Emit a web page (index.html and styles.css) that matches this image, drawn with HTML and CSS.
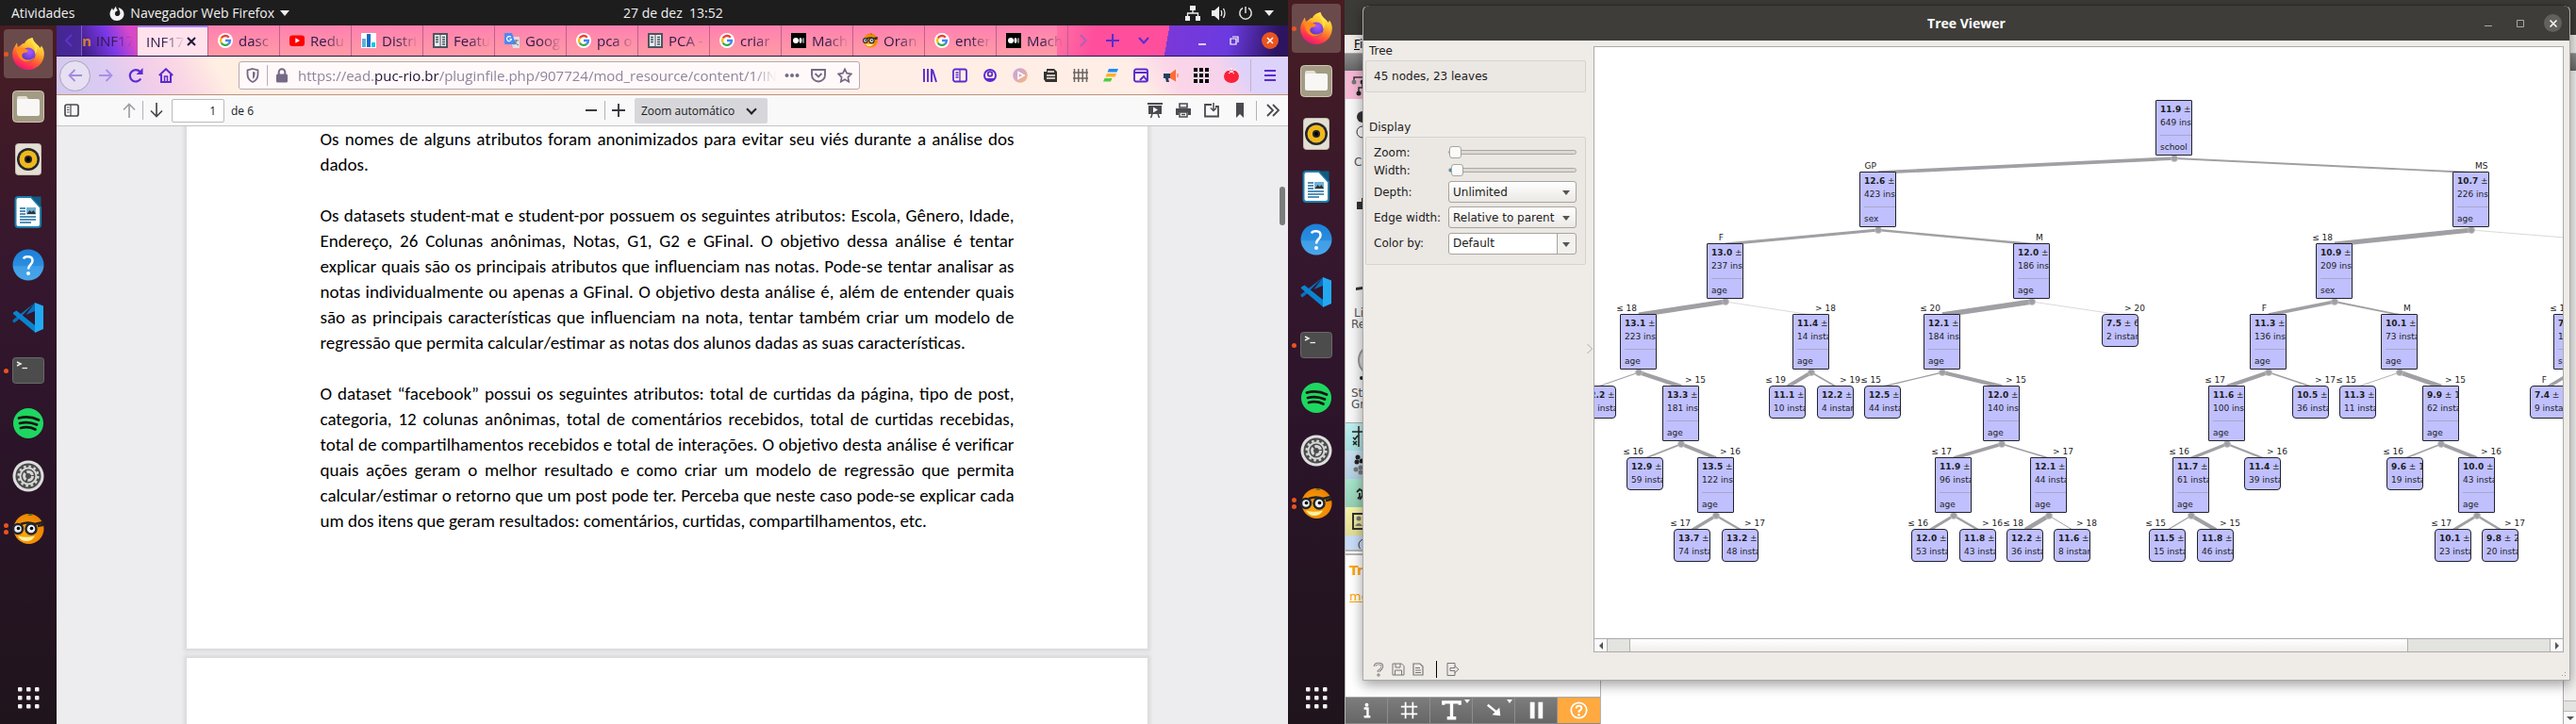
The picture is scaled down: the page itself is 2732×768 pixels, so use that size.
FILE: index.html
```html
<!DOCTYPE html>
<html lang="pt-BR">
<head>
<meta charset="utf-8">
<title>Tree Viewer</title>
<link rel="stylesheet" href="styles.css">
</head>
<body>
<svg class="defs" aria-hidden="true">
  <defs>
    <linearGradient id="fxg" x1="0.8" y1="0" x2="0.3" y2="1"><stop offset="0" stop-color="#fff44f"/><stop offset=".35" stop-color="#ffbd2f"/><stop offset=".6" stop-color="#ff6b2b"/><stop offset=".85" stop-color="#ff2a5a"/><stop offset="1" stop-color="#e31587"/></linearGradient>
    <radialGradient id="fxp" cx=".6" cy=".3" r=".8"><stop offset="0" stop-color="#a85bff"/><stop offset="1" stop-color="#4a2bc0"/></radialGradient>
    <linearGradient id="helpg" x1="0" y1="0" x2="0" y2="1"><stop offset="0" stop-color="#1b7fd8"/><stop offset=".53" stop-color="#2b8ee0"/><stop offset=".55" stop-color="#3f9ee6"/><stop offset="1" stop-color="#48a6ea"/></linearGradient>
    <radialGradient id="orng" cx=".4" cy=".6" r=".7"><stop offset="0" stop-color="#ffa90e"/><stop offset="1" stop-color="#ea7c00"/></radialGradient>
    <linearGradient id="playg" x1="0" y1="0" x2="1" y2="1"><stop offset="0" stop-color="#b6a8e8"/><stop offset=".5" stop-color="#e0a8b8"/><stop offset="1" stop-color="#f0c070"/></linearGradient>
  </defs>
  <symbol id="d-firefox" viewBox="0 0 34 34">
    <path fill="url(#fxg)" d="M17 34C8 34 0 27 .2 17.500C.3 12 3 9 4.200 6.500C4.800 5.300 5.200 5.800 5.300 7.500L6 10L9 8C11 6 12 6 13 6C14 3 18 .5 21.500 0C21 2 23.500 5 26 7C29 9 29 11 30 10.500L31 8.500C33 11.500 34 14.500 33.800 17.500C33.600 27 26 34 17 34z"/>
    <circle cx="17" cy="18" r="7.500" fill="url(#fxp)"/>
    <path fill="#ff8a1f" d="M4 13C8 9 12 10 17 13.500C17 15 15 16 12.500 16C10 17 9.500 20 12 22C15 24.500 20 24 23.500 21C21 27 10 27 6.500 20z"/>
    <path fill="#ffe14a" d="M20 1C19 6 26 10 24 17C27 14 27 11 26 9L30 14C29 8 23 6 21.500 0z"/>
  </symbol>
  <symbol id="d-files" viewBox="0 0 34 34"><rect x=".5" y=".5" width="33" height="33" rx="4" fill="#a39b84" stroke="#cfc8b4"/><path d="M5 8a2 2 0 0 1 2-2h8l2 3v6H5z" fill="#e4dfd3"/><rect x="5" y="9" width="24" height="18" rx="2" fill="#f8f7f5"/></symbol>
  <symbol id="d-music" viewBox="0 0 34 34"><rect x="3.500" y=".5" width="27" height="33" rx="3" fill="#e4dfd3" stroke="#c4bdae"/><circle cx="17" cy="17" r="12" fill="#23262e"/><circle cx="17" cy="17" r="9.500" fill="#f0b81c"/><circle cx="17" cy="17" r="4" fill="#22242a"/><circle cx="17" cy="17" r="2" fill="#000"/></symbol>
  <symbol id="d-writer" viewBox="0 0 34 34"><path d="M3.500 4a3 3 0 0 1 3-3H20L30 12V30a3 3 0 0 1-3 3H6.500a3 3 0 0 1-3-3z" fill="#fff" stroke="#1b7fb0" stroke-width="2"/><path d="M20 .5h10.500V12z" fill="#125a80"/><path d="M8 13h6M8 16h6M8 19h6M8 22h17M8 25h17M8 28h12" stroke="#1b6ea0" stroke-width="1.500"/><rect x="15" y="12" width="10" height="7.500" fill="#6db2d8"/><path d="M15.500 19l3-4 2 2 2-2 2.500 4z" fill="#333"/></symbol>
  <symbol id="d-help" viewBox="0 0 34 34"><circle cx="17" cy="17" r="16.500" fill="url(#helpg)"/><path d="M12 10.500C13 7.500 21.500 7 21.500 12.500C21.500 17 17 16.500 17 21.500" fill="none" stroke="#fff" stroke-width="2.500"/><circle cx="17" cy="26" r="2" fill="#fff"/></symbol>
  <symbol id="d-code" viewBox="0 0 34 34"><path d="M24 1L5.500 20 2 22.500.500 21V19.500L24 1z" fill="#0a6fb8"/><path d="M1 11.500l3.500-2L24 25v7.500L1 13z" fill="#0a84d0"/><path d="M24 1l-9.500 13L24 10z" fill="#0a6fb8"/><path d="M24 1l9 3.500V29l-9 4z" fill="#23a9f2"/></symbol>
  <symbol id="d-term" viewBox="0 0 34 34"><rect x=".5" y="3.500" width="33" height="27" rx="3" fill="#4c4c4c" stroke="#6a6a6a"/><path d="M5 8l4 2-4 2" fill="none" stroke="#eee" stroke-width="1.500"/><path d="M10.500 14.500h5.500" stroke="#eee" stroke-width="1.300"/></symbol>
  <symbol id="d-spot" viewBox="0 0 34 34"><circle cx="17" cy="17" r="16" fill="#1ed760"/><path d="M7 11.500Q18 8.500 28 13.500M8 17Q17 14.500 26 18.500M9 22Q17 19.800 24.500 23.500" fill="none" stroke="#191414" stroke-width="2.800" stroke-linecap="round"/></symbol>
  <symbol id="d-set" viewBox="0 0 34 34"><circle cx="17" cy="17" r="16.500" fill="#dedede"/><circle cx="17" cy="17" r="13.500" fill="#4b4b4b"/><circle cx="17" cy="17" r="10.300" fill="none" stroke="#d6d6d6" stroke-width="2.500" stroke-dasharray="2.600 2.800"/><circle cx="17" cy="17" r="8.500" fill="none" stroke="#d6d6d6" stroke-width="2"/><circle cx="17" cy="17" r="4.500" fill="none" stroke="#d6d6d6" stroke-width="3" stroke-dasharray="7.500 2"/></symbol>
  <symbol id="d-orange" viewBox="0 0 34 34"><circle cx="17.500" cy="17" r="16" fill="url(#orng)"/><path d="M17 2.500q2-1.500 4 0" stroke="#3c6b1e" stroke-width="1.500" fill="none"/><path d="M6 24.500Q15 27 24 24.500Q21 30 15 30Q9 30 6 24.500z" fill="#fff3a0"/><path d="M9 12q8-3 15 0l8-2v3l-5 1" fill="none" stroke="#222" stroke-width="2.500"/><circle cx="6" cy="17" r="5" fill="#e9eef5" stroke="#23262c" stroke-width="2.500"/><circle cx="20" cy="17" r="5.500" fill="#e9eef5" stroke="#23262c" stroke-width="2.500"/><circle cx="6.500" cy="16.500" r="1.800"/><circle cx="20.500" cy="16.500" r="1.800"/></symbol>
  <symbol id="d-apps" viewBox="0 0 34 34"><g fill="#f2f2f2"><rect x="6" y="6" width="4.500" height="4.500" rx="1"/><rect x="15" y="6" width="4.500" height="4.500" rx="1"/><rect x="24" y="6" width="4.500" height="4.500" rx="1"/><rect x="6" y="15" width="4.500" height="4.500" rx="1"/><rect x="15" y="15" width="4.500" height="4.500" rx="1"/><rect x="24" y="15" width="4.500" height="4.500" rx="1"/><rect x="6" y="24" width="4.500" height="4.500" rx="1"/><rect x="15" y="24" width="4.500" height="4.500" rx="1"/><rect x="24" y="24" width="4.500" height="4.500" rx="1"/></g></symbol>
  <symbol id="f-google" viewBox="0 0 16 16"><circle cx="8" cy="8" r="8" fill="#fff"/><g fill="none" stroke-width="2.300"><path d="M11.800 4.700A5 5 0 0 0 3.700 5.500" stroke="#ea4335"/><path d="M3.700 5.500A5 5 0 0 0 3.700 10.500" stroke="#fbbc05"/><path d="M3.700 10.500A5 5 0 0 0 11.300 11.700" stroke="#34a853"/><path d="M11.300 11.700A5 5 0 0 0 13 8H8" stroke="#4285f4"/></g></symbol>
  <symbol id="f-yt" viewBox="0 0 16 16"><rect y="2.500" width="16" height="11.500" rx="3" fill="#f00"/><path d="M6.300 5.300v5.400L11 8z" fill="#fff"/></symbol>
  <symbol id="f-bars" viewBox="0 0 16 16"><path fill="#fff" d="M0 0h16v16H0z"/><path fill="#5fb0d8" d="M1 6h4v9H1z"/><path fill="#0a6cc8" d="M6 1h4v14H6z"/><path fill="#12c8e8" d="M11 10h4v5h-4z"/></symbol>
  <symbol id="f-book" viewBox="0 0 16 16"><path fill="#4c555c" d="M0 0h16v16H0z"/><path fill="#e8eef2" d="M2 2h5.500v12H2zM8.500 2H14v12H8.500z"/><path stroke="#4c555c" stroke-width="1.300" d="M3 4.500h3M3 7h3M3 9.500h3M10 4.500h3M10 7h3M10 9.500h3M10 12h3"/></symbol>
  <symbol id="f-trans" viewBox="0 0 16 16"><path fill="#e0e0e0" d="M6 4h9a1 1 0 0 1 1 1v10a1 1 0 0 1-1 1H9z"/><path fill="#4a8af4" d="M1 0h7l4 12H1a1 1 0 0 1-1-1V1a1 1 0 0 1 1-1z"/><path d="M7 4.500A2.500 2.500 0 1 0 7.500 6.500H5.300" fill="none" stroke="#fff" stroke-width="1.200"/><path d="M10 8h5M12.500 7v1q0 3-2.500 4.500M11 9q1 3 4 4" fill="none" stroke="#6a7a8a"/></symbol>
  <symbol id="f-med" viewBox="0 0 16 16"><path d="M0 0h16v16H0z"/><circle cx="5" cy="8" r="3" fill="#fff"/><ellipse cx="10" cy="8" rx="1.500" ry="2.900" fill="#fff"/><path stroke="#fff" d="M13 5.300v5.400"/></symbol>
</svg>

<main class="desktop">
  <section class="monitor">
    <header class="topbar">
      <div class="topbar-left">
        <button>Atividades</button>
        <button class="appmenu"><svg width="16" height="16" viewBox="0 0 16 16"><path fill="#f2f2f2" d="M8 16C3.500 16 .5 12.500.5 8.500C.5 6 2 4 3 2.500L4 5L7 .5C7 3 8 4 9 5L6.500 6.500C5 9 6.500 11 8.500 11C11 11 12 8.500 11 6L9.500 2C13 3 15.500 5.500 15.500 9C15.500 13 12 16 8 16z"/></svg>Navegador Web Firefox<i class="caret"></i></button>
      </div>
      <time class="clock">27 de dez&nbsp; 13:52</time>
      <div class="tray">
        <svg width="16" height="16" viewBox="0 0 16 16"><path fill="#eee" d="M5 0h6v5H5zM0 11h5v5H0zM11 11h5v5h-5z"/><path d="M8 5v3M2.500 11V8h11v3" fill="none" stroke="#eee" stroke-width="1.300"/></svg>
        <svg width="16" height="16" viewBox="0 0 16 16"><path fill="#eee" d="M0 5h3l5-4.500v15L3 11H0z"/><path d="M10 5q1.500 3 0 6M12.500 3q3 5 0 10" fill="none" stroke="#eee" stroke-width="1.300"/></svg>
        <svg width="16" height="16" viewBox="0 0 16 16"><path d="M8 1v7M5 2.500a6.200 6.200 0 1 0 6 0" fill="none" stroke="#ddd" stroke-width="1.500"/></svg>
        <i class="caret"></i>
      </div>
    </header>
    <div class="workspace">
      <nav class="dock" aria-label="Dock">
        <button class="on one" aria-label="Firefox"><svg><use href="#d-firefox"/></svg></button>
        <button aria-label="Arquivos"><svg><use href="#d-files"/></svg></button>
        <button aria-label="Rhythmbox"><svg><use href="#d-music"/></svg></button>
        <button aria-label="Writer"><svg><use href="#d-writer"/></svg></button>
        <button aria-label="Ajuda"><svg><use href="#d-help"/></svg></button>
        <button aria-label="Code"><svg><use href="#d-code"/></svg></button>
        <button class="one" aria-label="Terminal"><svg><use href="#d-term"/></svg></button>
        <button aria-label="Spotify"><svg><use href="#d-spot"/></svg></button>
        <button aria-label="Configurações"><svg><use href="#d-set"/></svg></button>
        <button class="two" aria-label="Orange"><svg><use href="#d-orange"/></svg></button>
        <button class="apps" aria-label="Aplicativos"><svg><use href="#d-apps"/></svg></button>
      </nav>
      <div class="browser">
        <div class="tabs">
          <button class="tab-scroll" aria-label="Anterior"><svg width="8" height="14" viewBox="0 0 8 14"><path d="M7 1L1 7l6 6" fill="none" stroke="#5a35c8" stroke-width="2"/></svg></button>
          <button class="tab part"><b>n</b><span>INF17</span></button>
          <button class="tab active"><span>INF17</span><svg width="10" height="12" viewBox="0 0 10 12"><path d="M1 2l8 8M9 2l-8 8" stroke="#20123a" stroke-width="2"/></svg></button>
          <button class="tab"><svg><use href="#f-google"/></svg><span>dasc</span></button>
          <button class="tab"><svg><use href="#f-yt"/></svg><span>Redu</span></button>
          <button class="tab"><svg><use href="#f-bars"/></svg><span>Distri</span></button>
          <button class="tab"><svg><use href="#f-book"/></svg><span>Featu</span></button>
          <button class="tab"><svg><use href="#f-trans"/></svg><span>Goog</span></button>
          <button class="tab"><svg><use href="#f-google"/></svg><span>pca o</span></button>
          <button class="tab"><svg><use href="#f-book"/></svg><span>PCA -</span></button>
          <button class="tab"><svg><use href="#f-google"/></svg><span>criar</span></button>
          <button class="tab"><svg><use href="#f-med"/></svg><span>Mach</span></button>
          <button class="tab"><svg viewBox="0 0 34 34"><use href="#d-orange"/></svg><span>Oran</span></button>
          <button class="tab"><svg><use href="#f-google"/></svg><span>enter</span></button>
          <button class="tab"><svg><use href="#f-med"/></svg><span>Mach</span></button>
          <div class="tab-tools">
            <svg width="8" height="14" viewBox="0 0 8 14"><path d="M1 1l5.500 6L1 13" fill="none" stroke="#b060b8" stroke-width="2"/></svg>
            <svg width="14" height="14" viewBox="0 0 14 14"><path d="M7 0v14M0 7h14" stroke="#5a2bd0" stroke-width="2"/></svg>
            <svg width="12" height="14" viewBox="0 0 12 14"><path d="M1 4l5 5.500L11 4" fill="none" stroke="#5a2bd0" stroke-width="2"/></svg>
          </div>
          <div class="win-tools">
            <svg width="10" height="10" viewBox="0 0 10 10"><path d="M1 9h8" stroke="#fff" stroke-width="1.500"/></svg>
            <svg width="10" height="10" viewBox="0 0 10 10"><path d="M1 3h6v6H1zM3 1h6v6" fill="none" stroke="#fff" stroke-width="1.200"/></svg>
            <button class="close" aria-label="Fechar"><svg width="8" height="8" viewBox="0 0 8 8"><path d="M1 1l6 6M7 1L1 7" stroke="#fff" stroke-width="1.500"/></svg></button>
          </div>
        </div>
        <div class="navbar">
          <div class="nav-buttons">
            <button class="back" aria-label="Voltar"><svg width="16" height="16" viewBox="0 0 16 16"><path d="M15 8H1M7.500 2L1.500 8l6 6" fill="none" stroke="#a58ae0" stroke-width="1.800"/></svg></button>
            <button aria-label="Avançar"><svg width="16" height="16" viewBox="0 0 16 16"><path d="M1 8h14M8.500 2l6 6-6 6" fill="none" stroke="#a98fe8" stroke-width="1.800"/></svg></button>
            <button aria-label="Recarregar"><svg width="16" height="16" viewBox="0 0 16 16"><path d="M13.300 11.500A6.200 6.200 0 1 1 12.500 4" fill="none" stroke="#5a2bd0" stroke-width="2.200"/><path d="M15.500 0v7H8.500z" fill="#5a2bd0"/></svg></button>
            <button aria-label="Início"><svg width="16" height="16" viewBox="0 0 16 16"><path d="M.800 8L8 1.200 15.200 8M3 7v8h10V7" fill="none" stroke="#5a2bd0" stroke-width="2"/><path d="M6.500 9h3v6h-3z" fill="none" stroke="#5a2bd0" stroke-width="1.500"/></svg></button>
          </div>
          <div class="urlbar">
            <svg width="14" height="16" viewBox="0 0 14 16"><path d="M7 1l5.500 1.500V7q0 5.500-5.500 8Q1.500 12.500 1.500 7V2.500z" fill="none" stroke="#746a86" stroke-width="1.800"/><path d="M7 4v8Q9.500 10 9.500 7V4.500z" fill="#746a86"/></svg>
            <i class="vr"></i>
            <svg width="14" height="16" viewBox="0 0 14 16"><rect x="1" y="6.500" width="12" height="9" rx="1.500" fill="#746a86"/><path d="M3.700 7V4.500a3.300 3.300 0 0 1 6.600 0V7" fill="none" stroke="#746a86" stroke-width="2"/></svg>
            <a class="url" href="#doc">https://ead.<b>puc-rio.br</b>/pluginfile.php/907724/mod_resource/content/1/IN</a>
            <svg width="16" height="16" viewBox="0 0 16 16"><g fill="#746a86"><circle cx="2.500" cy="8" r="2"/><circle cx="8" cy="8" r="2"/><circle cx="13.500" cy="8" r="2"/></g></svg>
            <svg width="16" height="16" viewBox="0 0 16 16"><path d="M1 2h14v5.500a7 7 0 0 1-14 0z" fill="none" stroke="#746a86" stroke-width="1.900"/><path d="M4.500 6L8 9.500 11.500 6" fill="none" stroke="#746a86" stroke-width="1.900"/></svg>
            <svg width="16" height="16" viewBox="0 0 16 16"><path d="M8 1.300l2.100 4.400 4.700.7-3.400 3.400.8 4.900L8 12.300l-4.200 2.400.8-4.900L1.200 6.400l4.700-.7z" fill="none" stroke="#746a86" stroke-width="1.700"/></svg>
          </div>
          <div class="addons">
            <svg viewBox="0 0 16 16"><path d="M2 1v14M6 1v14M10 1v14M11 2l4 13" stroke="#5a2bd0" stroke-width="1.900"/></svg>
            <svg viewBox="0 0 16 16"><rect x="1" y="1.500" width="14" height="13" rx="2" fill="none" stroke="#5a2bd0" stroke-width="1.800"/><path d="M8 2v12M3.500 5h3M3.500 7.500h3M3.500 10h3" stroke="#5a2bd0" stroke-width="1.300"/></svg>
            <svg viewBox="0 0 16 16"><circle cx="8" cy="8" r="6" fill="none" stroke="#5a2bd0" stroke-width="2"/><circle cx="8" cy="6.500" r="2.300" fill="none" stroke="#5a2bd0" stroke-width="1.800"/><path d="M3 11h10l-3 3H6z" fill="#5a2bd0"/></svg>
            <svg viewBox="0 0 16 16"><circle cx="8" cy="8" r="7.800" fill="url(#playg)"/><path d="M6 4.500v7L12 8z" fill="none" stroke="#fff" stroke-width="1.500"/></svg>
            <svg viewBox="0 0 16 16"><path d="M4 1h8l3 3v11H3L1 12V4h3z" fill="#333"/><path d="M5 4h7M4 8h9M4 11h9" stroke="#fff0e8" stroke-width="1.500"/></svg>
            <svg viewBox="0 0 16 16"><path d="M1.500 1v14M5.800 1v14M10.200 1v14M14.500 1v14M0 5h16M0 11h16" stroke="#6a6560" stroke-width="1.500"/></svg>
            <svg viewBox="0 0 16 16"><path d="M6 1h10l-1.500 3.500h-10z" fill="#1a8cff"/><path d="M4 6h10l-1.500 3.500h-10z" fill="#ffb020"/><path d="M1.500 11h8L8 14.500H0z" fill="#4cd040"/></svg>
            <svg viewBox="0 0 16 16"><rect x="1" y="1.500" width="14" height="13" rx="2" fill="none" stroke="#5a2bd0" stroke-width="1.900"/><path d="M1 5h14M7 13l4-4 4 5" fill="none" stroke="#5a2bd0" stroke-width="2"/></svg>
            <svg viewBox="0 0 16 16"><path d="M0 6h7v5H5l1 4H3L2 11H0z" fill="#25405c"/><path d="M7 6l6-4.500v13L7 11z" fill="#ff6a38"/><path d="M14 6h2v4h-2z" fill="#f0a080"/></svg>
            <svg viewBox="0 0 16 16"><path d="M0 0h4v4H0zM6 0h4v4H6zM12 0h4v4h-4zM0 6h4v4H0zM6 6h4v4H6zM12 6h4v4h-4zM0 12h4v4H0zM6 12h4v4H6zM12 12h4v4h-4z"/></svg>
            <svg viewBox="0 0 16 16"><ellipse cx="8" cy="9" rx="8" ry="7" fill="#fa2138"/><path d="M8 0v4M4 1.500l4 3 4-3M5 6l3-2 3 2" stroke="#fff" fill="none"/></svg>
          </div>
          <i class="vr nav-vr"></i>
          <button class="burger" aria-label="Menu"><svg width="12" height="14" viewBox="0 0 12 14"><path d="M0 2h12M0 7h12M0 12h12" stroke="#5a2bd0" stroke-width="2.200"/></svg></button>
        </div>
        <div class="pdfbar">
          <div class="pdf-left">
            <button class="side" aria-label="Painel"><svg width="16" height="14" viewBox="0 0 16 14"><rect x="1" y="1" width="14" height="12" rx="2" fill="none" stroke="#4a4a4f" stroke-width="1.700"/><path d="M7 1v12M3 4h2.500M3 6.500h2.500M3 9h2.500" stroke="#4a4a4f" stroke-width="1.200"/></svg></button>
            <button aria-label="Anterior"><svg width="14" height="16" viewBox="0 0 14 16"><path d="M7 16V1.500M1 7.500l6-6 6 6" fill="none" stroke="#a0a0a3" stroke-width="1.700"/></svg></button>
            <i class="vr"></i>
            <button aria-label="Próxima"><svg width="14" height="16" viewBox="0 0 14 16"><path d="M7 0v14.500M1 8.500l6 6 6-6" fill="none" stroke="#4a4a4f" stroke-width="1.700"/></svg></button>
            <input id="pg" value="1" aria-label="Página"><label for="pg">de 6</label>
          </div>
          <div class="pdf-zoom">
            <button aria-label="Reduzir"><svg width="14" height="14" viewBox="0 0 14 14"><path d="M1 7h12" stroke="#3a3a3f" stroke-width="2"/></svg></button>
            <i class="vr"></i>
            <button aria-label="Ampliar"><svg width="14" height="14" viewBox="0 0 14 14"><path d="M0 7h14M7 0v14" stroke="#3a3a3f" stroke-width="1.900"/></svg></button>
            <span class="zoomsel"><select aria-label="Zoom"><option>Zoom automático</option></select></span>
          </div>
          <div class="pdf-right">
            <svg viewBox="0 0 16 16"><path d="M0 0h16v2H0zM1 3h14v9H1z" fill="#4a4a4f"/><path d="M6 4.500v6L11 7.500z" fill="#f9f9fa"/><path d="M5 12l-1.500 4M11 12l1.500 4" stroke="#4a4a4f" stroke-width="1.500"/></svg>
            <svg viewBox="0 0 16 16"><path d="M4 1h8v4H4z" fill="none" stroke="#4a4a4f" stroke-width="1.600"/><path d="M0 6h16v7h-3v-3H3v3H0z" fill="#4a4a4f"/><path d="M4 10h8v5H4zM6 12.500h4" fill="none" stroke="#4a4a4f" stroke-width="1.500"/></svg>
            <svg viewBox="0 0 16 16"><path d="M8 2H1v12.500h14V4h-3" fill="none" stroke="#4a4a4f" stroke-width="1.800"/><path d="M10 0v8M7 5.500l3 3 3-3" fill="none" stroke="#4a4a4f" stroke-width="1.500"/></svg>
            <svg viewBox="0 0 16 16"><path d="M4 0h8v16l-4-4-4 4z" fill="#4a4a4f"/></svg>
            <i class="vr"></i>
            <svg viewBox="0 0 16 16"><path d="M2 2l6 6-6 6M8 2l6 6-6 6" fill="none" stroke="#4a4a4f" stroke-width="1.800"/></svg>
          </div>
        </div>
        <div class="viewer">
          <article class="sheet first" id="doc">
            <p><span>Os nomes de alguns atributos foram anonimizados para evitar seu viés durante a análise dos</span><span>dados.</span></p>
            <p><span>Os datasets student-mat e student-por possuem os seguintes atributos: Escola, Gênero, Idade,</span><span>Endereço, 26 Colunas anônimas, Notas, G1, G2 e GFinal. O objetivo dessa análise é tentar</span><span>explicar quais são os principais atributos que influenciam nas notas. Pode-se tentar analisar as</span><span>notas individualmente ou apenas a GFinal. O objetivo desta análise é, além de entender quais</span><span>são as principais características que influenciam na nota, tentar também criar um modelo de</span><span>regressão que permita calcular/estimar as notas dos alunos dadas as suas características.</span></p>
            <p><span>O dataset “facebook” possui os seguintes atributos: total de curtidas da página, tipo de post,</span><span>categoria, 12 colunas anônimas, total de comentários recebidos, total de curtidas recebidas,</span><span>total de compartilhamentos recebidos e total de interações. O objetivo desta análise é verificar</span><span>quais ações geram o melhor resultado e como criar um modelo de regressão que permita</span><span>calcular/estimar o retorno que um post pode ter. Perceba que neste caso pode-se explicar cada</span><span>um dos itens que geram resultados: comentários, curtidas, compartilhamentos, etc.</span></p>
          </article>
          <article class="sheet next"></article>
          <i class="thumb"></i>
        </div>
      </div>
    </div>
  </section>

  <section class="monitor second">
    <nav class="dock" aria-label="Dock 2">
      <button class="on one" aria-label="Firefox"><svg><use href="#d-firefox"/></svg></button>
      <button aria-label="Arquivos"><svg><use href="#d-files"/></svg></button>
      <button aria-label="Rhythmbox"><svg><use href="#d-music"/></svg></button>
      <button aria-label="Writer"><svg><use href="#d-writer"/></svg></button>
      <button aria-label="Ajuda"><svg><use href="#d-help"/></svg></button>
      <button aria-label="Code"><svg><use href="#d-code"/></svg></button>
      <button class="one" aria-label="Terminal"><svg><use href="#d-term"/></svg></button>
      <button aria-label="Spotify"><svg><use href="#d-spot"/></svg></button>
      <button aria-label="Configurações"><svg><use href="#d-set"/></svg></button>
      <button class="two" aria-label="Orange"><svg><use href="#d-orange"/></svg></button>
      <button class="apps" aria-label="Aplicativos"><svg><use href="#d-apps"/></svg></button>
    </nav>
    <div class="orange">
      <div class="or-title"></div>
      <div class="or-menu"><u>F</u>ile</div>
      <div class="or-tool"></div>
      <div class="or-main">
        <div class="or-side">
          <div class="cat pink"><svg width="36" height="30" viewBox="0 0 36 30"><path d="M9 10V7h26M14 22v-4h14M18 13v5" fill="none" stroke="#333" stroke-width="1.500"/><circle cx="9" cy="12" r="2.500" fill="#777"/><circle cx="18" cy="12" r="2.500" fill="#333"/><circle cx="14" cy="24" r="2.500" fill="#222"/></svg></div>
          <div class="widgets">
            <svg width="40" height="60" viewBox="0 0 40 60"><circle cx="18" cy="19" r="6" fill="#333"/><circle cx="18" cy="35" r="6" fill="#fff" stroke="#333"/></svg>
            <span>Constant</span>
            <svg width="40" height="90" viewBox="0 0 40 90"><path d="M12 36h5v-4h20v12H12z" fill="#333"/></svg>
            <svg width="40" height="56" viewBox="0 0 40 56"><path d="M11 36l14-2v3l-14 2z" fill="#333"/></svg>
            <span>Linear</span><span class="r2">Regression</span>
            <svg width="40" height="60" viewBox="0 0 40 60"><circle cx="30" cy="32" r="16" fill="#ddd" stroke="#999" stroke-width="2"/><circle cx="17" cy="51" r="2" fill="#222"/></svg>
            <span class="r2">Stochastic</span><span class="r2">Gradient</span>
          </div>
          <div class="cat teal"><svg width="36" height="30" viewBox="0 0 36 30"><path d="M7 9h20M14 3v22M8 15l2 2 3-4M8 19l4 4M12 19l-4 4" fill="none" stroke="#222" stroke-width="1.500"/></svg></div>
          <div class="cat blue"><svg width="36" height="30" viewBox="0 0 36 30"><g fill="#222"><circle cx="13" cy="7" r="2.500"/><circle cx="12" cy="12" r="2.500"/><circle cx="17" cy="11" r="2.500"/></g><g fill="#777"><circle cx="11" cy="20" r="2.500"/><circle cx="16" cy="18" r="2.500"/><circle cx="16" cy="23" r="2.500"/></g></svg></div>
          <div class="cat green"><svg width="36" height="30" viewBox="0 0 36 30"><path d="M12 14l3-3 3 2v5l-3 4M15 15v4l-2 2" fill="none" stroke="#222" stroke-width="1.800"/></svg></div>
          <div class="cat yellow"><svg width="36" height="30" viewBox="0 0 36 30"><rect x="8" y="7" width="26" height="16" fill="none" stroke="#333" stroke-width="2"/><circle cx="14" cy="12" r="2.500" fill="#777"/><path d="M10 20q4-6 8 0z" fill="#777"/></svg></div>
          <div class="cat sky"><svg width="36" height="14" viewBox="0 0 36 14"><circle cx="20" cy="10" r="6" fill="none" stroke="#333"/></svg></div>
          <div class="or-info"><b>Tree Viewer</b><a href="#more">more...</a></div>
          <div class="or-buttons">
            <button aria-label="Info"><svg viewBox="0 0 28 28"><path d="M11 12h4v9M11 21h7" fill="none" stroke="#fff" stroke-width="2.500"/><circle cx="14" cy="8" r="2" fill="#fff"/></svg></button>
            <button aria-label="Grade"><svg viewBox="0 0 28 28"><path d="M10 5v18M18 5v18M5 10h18M5 18h18" stroke="#fff" stroke-width="1.800"/></svg></button>
            <button aria-label="Texto"><svg viewBox="0 0 28 28"><path d="M5 8V5h18v3M14 5v17M9 22.500h10" fill="none" stroke="#fff" stroke-width="3.500"/></svg><i></i></button>
            <button aria-label="Seta"><svg viewBox="0 0 28 28"><path d="M7 8l11 9" stroke="#fff" stroke-width="2.500"/><path d="M21 20l-1-9-8 8z" fill="#fff"/></svg><i></i></button>
            <button aria-label="Pausa"><svg viewBox="0 0 28 28"><path d="M7 5h5v18H7zM16 5h5v18h-5z" fill="#fff"/></svg></button>
            <button class="hl" aria-label="Ajuda"><svg viewBox="0 0 28 28"><circle cx="14" cy="14" r="8.500" fill="none" stroke="#fff" stroke-width="1.800"/><path d="M11 12q0-3 3-3t3 2.500q0 2-3 3.500v1.500" fill="none" stroke="#fff" stroke-width="2"/><circle cx="14" cy="19" r="1.300" fill="#fff"/></svg></button>
          </div>
        </div>
        <div class="or-canvas"></div>
        <div class="or-scroll"><div class="or-thumb"></div><button aria-label="Descer"></button></div>
      </div>
    </div>

    <div class="dialog" role="dialog" aria-labelledby="dlg">
      <header class="dlg-title">
        <h1 id="dlg">Tree Viewer</h1>
        <div class="dlg-buttons">
          <svg width="10" height="10" viewBox="0 0 10 10"><path d="M1 7.500h8" stroke="#aaa" stroke-width="1"/></svg>
          <svg width="10" height="10" viewBox="0 0 10 10"><path d="M1.500 1.500h7v7h-7z" fill="none" stroke="#aaa"/></svg>
          <button aria-label="Fechar janela"><svg width="8" height="8" viewBox="0 0 8 8"><path d="M.500.500l7 7M7.500.500l-7 7" stroke="#fff" stroke-width="1.500"/></svg></button>
        </div>
      </header>
      <div class="dlg-body">
        <aside class="controls">
          <h2>Tree</h2>
          <div class="group info">45 nodes, 23 leaves</div>
          <h2 class="gap">Display</h2>
          <form class="group form">
            <label for="zoom">Zoom:</label><input id="zoom" type="range" min="0" max="100" value="0">
            <label for="wid">Width:</label><input id="wid" class="filled" type="range" min="0" max="100" value="2">
            <label for="dep">Depth:</label><span class="sel"><select id="dep"><option>Unlimited</option></select></span>
            <label for="edg">Edge width:</label><span class="sel"><select id="edg"><option>Relative to parent</option></select></span>
            <label for="col">Color by:</label><span class="sel combo"><select id="col"><option>Default</option></select></span>
          </form>
          <button class="fold" aria-label="Recolher"><svg width="6" height="12" viewBox="0 0 6 12"><path d="M.500 1l5 5-5 5" fill="none" stroke="#aaa"/></svg></button>
        </aside>
        <div class="view">
          <div class="tree" id="tree"></div>
          <div class="hscroll"><button class="l" aria-label="Esquerda"></button><div class="hslider"></div><button class="r" aria-label="Direita"></button></div>
        </div>
      </div>
      <footer class="status">
        <svg width="12" height="16" viewBox="0 0 12 16"><path d="M2 5Q2 2 6 2t4 3q0 2-4 5v1" fill="none" stroke="#777" stroke-width="2.600"/><path d="M2 5Q2 2 6 2t4 3q0 2-4 5v1" fill="none" stroke="#efebe7" stroke-width="1"/><circle cx="6" cy="14" r="1.200" fill="none" stroke="#777"/></svg>
        <svg width="14" height="14" viewBox="0 0 14 14"><path d="M1 1h9.500L13 3.500V13H1zM4 1v4h5V1M3.500 13V8h7v5" fill="none" stroke="#777"/></svg>
        <svg width="12" height="14" viewBox="0 0 12 14"><path d="M1 1h7l3 3v9H1zM3 5.500h5M3 8h6M3 10.500h6" fill="none" stroke="#777" stroke-width="1.200"/></svg>
        <i class="bar"></i>
        <svg width="14" height="16" viewBox="0 0 14 16"><path d="M9 5V1.500H1v13h8V11M4 6.500h5V4.500L13 8l-4 3.500v-2H4z" fill="none" stroke="#777"/></svg>
        <i class="grip"></i>
      </footer>
    </div>
  </section>
</main>
<script src="tree.js"></script>
</body>
</html>
```

FILE: styles.css
```css
* { box-sizing: border-box; }
body { margin: 0; font-family: "Open Sans", "Noto Sans", sans-serif; overflow: hidden; }
button, input, select { font: inherit; color: inherit; margin: 0; }
button { border: 0; padding: 0; background: none; }
a { color: inherit; text-decoration: none; }
svg { display: block; flex: none; }
.defs { position: absolute; width: 0; height: 0; }
.desktop { display: grid; grid-template-columns: 1fr 1fr; height: 100vh; }
.monitor { display: flex; flex-direction: column; min-width: 0; min-height: 0; overflow: hidden; position: relative; }
.vr { width: 1px; background: #b4b0b8; flex: none; }

/* top bar */
.topbar { height: 27px; flex: none; background: #1d1d1d; color: #f0f0f0; font-size: 14px; display: grid; grid-template-columns: 661px 1fr auto; align-items: center; padding-right: 15px; }
.topbar-left { display: flex; gap: 37px; padding-left: 12px; }
.appmenu { display: flex; align-items: center; gap: 6px; }
.caret { border: 5px solid transparent; border-top: 6px solid #eee; border-bottom: 0; width: 0; }
.tray { display: flex; align-items: center; gap: 12px; }

/* dock */
.workspace { display: flex; flex: 1; min-height: 0; }
.dock { width: 60px; flex: none; background: linear-gradient(#471d22, #35172e 35%, #2b1429 60%, #1f141c); display: flex; flex-direction: column; align-items: center; gap: 4px; padding: 4px 0 2px; }
.dock button { width: 52px; height: 52px; border-radius: 4px; display: grid; place-items: center; position: relative; }
.dock svg { width: 34px; height: 34px; }
.dock .on { background: #6b4a4c; }
.dock .one::before, .dock .two::before { content: ""; position: absolute; left: 0; top: 24px; width: 5px; height: 5px; border-radius: 50%; background: #e95420; }
.dock .two::before { top: 20px; box-shadow: 0 7px #e95420; }
.dock .apps { margin-top: auto; }

/* browser */
.browser { flex: 1; min-width: 0; display: flex; flex-direction: column; }
.tabs { height: 33px; flex: none; display: flex; border-bottom: 1px solid #2a1248; font-size: 15px; color: #2e1848;
  background: linear-gradient(#ff80b0, #ff9ba5) 161px 0 / 900px 100% no-repeat, linear-gradient(100deg, #4a2fa0, #7a38d8 10%, #c040d0 14%, #ff5098 17%, #ff7aa8 80%, #ff4f9c 84%, #ff4f9c 90%, #7a38d8 90%, #6a3ae0 95%, #2c1460 99%); }
.tab-scroll { width: 27px; display: grid; place-items: center; border-right: 1px solid #7d5cc8; background: #3a1c7c66; }
.tab { width: 76px; flex: none; display: flex; align-items: center; gap: 6px; padding: 0 4px 0 10px; border-right: 1px solid #c0608c; overflow: hidden; }
.tab svg { width: 16px; height: 16px; }
.tab span { flex: 1; min-width: 0; text-align: left; white-space: nowrap; mask-image: linear-gradient(90deg, #000 40%, transparent); }
.tab.part { width: 59px; padding-left: 0; gap: 5px; background: linear-gradient(65deg, #3a1c7c, #7a38e8 50%, #d848c8 85%); }
.tab.part b { color: #d08030; }
.tab.active { width: 75px; background: #ffe2ec; border-top: 2px solid #a87bff; padding: 0 12px 0 9px; gap: 2px; }
.tab.active svg { width: 10px; height: 12px; }
.tab-tools { display: flex; align-items: center; gap: 20px; margin-left: 12px; }
.win-tools { display: flex; align-items: center; gap: 24px; margin-left: auto; margin-right: 10px; }
.win-tools .close { width: 18px; height: 18px; border-radius: 50%; background: #e95420; display: grid; place-items: center; }
.navbar { height: 41px; flex: none; display: flex; align-items: center; border-bottom: 1px solid #bf9078; background: linear-gradient(62deg, #d2c8ee, #dccbf2 5%, #f2cdea 8%, #fbd8e4 11%, #ffeee2 14%, #ffeee6 87%, #fbd6e8 90%, #f6d2ec 94%, #ddd2fa 96%); }
.nav-buttons { display: flex; gap: 16px; width: 193px; padding-left: 3px; align-items: center; }
.nav-buttons .back { width: 33px; height: 33px; border-radius: 50%; border: 1px solid #aaa0bc; background: #e6e0f2; display: grid; place-items: center; margin-right: -8px; }
.urlbar { flex: 0 1 657px; height: 30px; border: 1px solid #b8a8b4; border-radius: 3px; background: #fffaf9; display: flex; align-items: center; gap: 8px; padding: 0 7px; }
.urlbar .vr { height: 22px; }
.urlbar .url { flex: 1; min-width: 0; overflow: hidden; white-space: nowrap; margin-left: 2px; font-size: 15px; color: #8f84a0; mask-image: linear-gradient(90deg, #000 95%, transparent); }
.urlbar .url b { font-weight: 400; color: #20123a; }
.urlbar svg:nth-last-child(-n+2) { margin-left: 4px; }
.addons { display: flex; gap: 16px; margin-left: auto; }
.addons svg { width: 16px; height: 16px; }
.nav-vr { height: 34px; margin: 0 14px 0 12px; background: #c8b0c4; }
.burger { margin-right: 13px; }
.pdfbar { height: 33px; flex: none; background: #f9f9fa; border-bottom: 1px solid #c4c4c6; display: flex; align-items: center; font-size: 12px; color: #1a1a1c; }
.pdf-left { width: 560px; display: flex; align-items: center; gap: 7px; padding-left: 8px; }
.pdf-left .side { margin-right: 39px; }
.pdfbar .vr { height: 20px; }
.pdf-left input { width: 56px; height: 25px; border: 1px solid #bbb; border-radius: 2px; text-align: right; padding: 0 8px; background: #fff; margin-left: 2px; }
.pdf-zoom { display: flex; align-items: center; gap: 7px; }
.zoomsel { position: relative; margin-left: 3px; }
.zoomsel select { appearance: none; width: 141px; height: 27px; border: 0; background: #d7d7db; padding: 0 7px; border-radius: 2px; }
.zoomsel::after { content: ""; position: absolute; right: 13px; top: 8px; width: 6px; height: 6px; border: solid #222; border-width: 0 2px 2px 0; transform: rotate(45deg); }
.pdf-right { margin-left: auto; display: flex; align-items: center; gap: 14px; padding-right: 8px; }
.pdf-right svg { width: 16px; height: 16px; }
.pdf-right .vr { margin: 0 -5px; height: 21px; }
.viewer { flex: 1; min-height: 0; overflow: hidden; background: #ededef; padding-right: 12px; display: flex; flex-direction: column; align-items: center; gap: 10px; position: relative; }
.sheet { width: 1019px; max-width: 100%; flex: none; background: #fff; box-shadow: 0 0 4px 3px #d9d9db; }
.first { padding: 0 141px 95px 142px; font: 19px/27px Carlito, Lato, sans-serif; color: #000; }
.next { height: 400px; }
.sheet p { margin: 0 0 27px; }
.sheet span { display: block; white-space: nowrap; text-align-last: justify; }
.sheet span:last-child { text-align-last: left; }
.thumb { position: absolute; right: 3px; top: 64px; width: 6px; height: 41px; border-radius: 3px; background: #7b7d7d; }

/* second monitor */
.second { flex-direction: row; }
.orange { flex: 1; min-width: 0; display: flex; flex-direction: column; background: #efebe7; font: 12px/12px "DejaVu Sans", sans-serif; }
.or-title { height: 37px; background: #3c3b37; flex: none; }
.or-menu { height: 20px; flex: none; padding: 4px 10px; border-bottom: 1px solid #aaa; }
.or-tool { height: 18px; flex: none; background: linear-gradient(#8c8c8c, #666); }
.or-main { flex: 1; min-height: 0; display: flex; background: #fff; }
.or-side { width: 272px; flex: none; display: flex; flex-direction: column; border: solid #b4b4b4; border-width: 0 1px; overflow: hidden; }
.cat { height: 30px; flex: none; }
.pink { background: #f5b8d4; }
.teal { background: linear-gradient(#bdeeee, #a6e0de); height: 29px; }
.blue { background: linear-gradient(#c8dfee, #b4cde0); }
.green { background: linear-gradient(#a8e4cc, #94d0b4); }
.yellow { background: linear-gradient(#f5f3a8, #e2dc90); }
.sky { background: #c8dcf8; height: 15px; }
.widgets { flex: 1 1 345px; min-height: 0; overflow: hidden; background: #f7f7f7; border-bottom: 1px solid #aaa; color: #555; }
.widgets span { display: block; padding-left: 9px; }
.widgets span.r2 { padding-left: 6px; }
.widgets svg { margin-bottom: 1px; }
.or-info { flex: 0 0 156px; border-top: 6px double #b4b4b4; background: #fff; color: #ffa500; padding: 10px 4px; display: flex; flex-direction: column; gap: 16px; font-size: 13px; }
.or-info b { font-size: 14px; }
.or-info a { text-decoration: underline; }
.or-buttons { flex: 0 0 29px; display: grid; grid-template-columns: repeat(6, 1fr); background: linear-gradient(#7d7d7d, #666); border-top: 1px solid #aaa; border-bottom: 1px solid #888; }
.or-buttons button { border-right: 1px solid #8e8e8e; display: grid; place-items: center; position: relative; }
.or-buttons svg { width: 27px; height: 27px; }
.or-buttons i { position: absolute; right: 2px; top: 2px; border: 3px solid transparent; border-top: 4px solid #fff; border-bottom: 0; }
.or-buttons .hl { background: #ffa940; border: 0; }
.or-canvas { flex: 1; }
.or-scroll { width: 14px; border-left: 1px solid #aaa; background: #f2f1ef; display: flex; flex-direction: column; justify-content: flex-end; }
.or-thumb { height: 12px; background: #e3e3df; border: solid #bbb; border-width: 1px 0; }
.or-scroll button { height: 13px; display: grid; place-items: center; background: #fafafa; }
.or-scroll button::after { content: ""; border: 4px solid transparent; border-top-color: #555; border-bottom: 0; }

/* dialog window */
.dialog { position: absolute; inset: 5px 6px 46px 79px; display: flex; flex-direction: column; background: #efebe7; border: 1px solid #aaa; border-top: 1px solid #2a2926; border-radius: 7px 7px 0 0; box-shadow: 0 4px 14px #0006; font: 12px/14px "DejaVu Sans", sans-serif; color: #1c1c1c; }
.dlg-title { height: 37px; flex: none; background: #3e3d39; border-radius: 6px 6px 0 0; display: grid; grid-template-columns: 1fr auto 1fr; align-items: center; color: #fff; }
.dlg-title h1 { grid-column: 2; margin: 0; font: bold 14px "Open Sans", sans-serif; }
.dlg-buttons { display: flex; justify-content: flex-end; align-items: center; gap: 24px; padding-right: 8px; }
.dlg-buttons button { width: 19px; height: 19px; border-radius: 50%; background: #62615e; display: grid; place-items: center; margin-left: -4px; }
.dlg-body { flex: 1; min-height: 0; display: flex; padding: 6px 6px 0 0; }
.controls { width: 244px; flex: none; padding: 0 8px 0 2px; position: relative; }
.controls h2 { margin: 0 0 4px 4px; font: inherit; line-height: 11px; }
.controls .gap { margin-top: 32px; }
.group { border: 1px solid #d6d2cd; border-radius: 2px; background: #ebe7e3; }
.info { padding: 9px 8px; height: 34px; }
.form { display: grid; grid-template-columns: 79px 1fr; grid-template-rows: 19px 19px 27px 27px 28px; align-items: center; padding: 6px 9px 8px 8px; }
.sel { position: relative; display: block; }
.sel select { appearance: none; width: 100%; height: 23px; border: 1px solid #a8a49f; border-radius: 3px; background: linear-gradient(#fff, #ebe8e4); padding: 0 4px; display: block; }
.sel::after { content: ""; position: absolute; right: 7px; top: 10px; border: 4px solid transparent; border-top: 5px solid #555; border-bottom: 0; }
.combo select { background: linear-gradient(90deg, #fff 114px, #a8a49f 114px 115px, #f3f1ee 115px); }
input[type=range] { appearance: none; height: 13px; width: 100%; background: none; }
input[type=range]::-webkit-slider-runnable-track { height: 5px; border: 1px solid #aaa6a0; border-radius: 3px; background: #dcd9d5; }
input.filled::-webkit-slider-runnable-track { background: linear-gradient(90deg, #308cc6 6px, #dcd9d5 6px); }
input[type=range]::-webkit-slider-thumb { appearance: none; width: 13px; height: 13px; margin-top: -5px; border: 1px solid #a8a49f; border-radius: 3px; background: #fafafa; }
.fold { position: absolute; right: 1px; top: 49%; }
.view { flex: 1; min-width: 0; display: flex; flex-direction: column; border: 1px solid #aaa; background: #fff; }
.tree { flex: 1; min-height: 0; position: relative; overflow: hidden; font-size: 9px; line-height: 14px; }
.tree svg { position: absolute; left: 0; top: 0; width: 100%; height: 100%; }
.node { position: absolute; width: 39px; height: 59px; border: 1px solid #22222c; border-radius: 1px; background: #c0c0ff; overflow: hidden; white-space: nowrap; padding: 2px 0 0 4px; }
.node.leaf { height: 35px; border-radius: 4px; }
.node hr { margin: 6px 0 5px; border: 0; border-top: 1px solid #a8a8c8; }
.node div { height: 14px; }
.tag { position: absolute; white-space: nowrap; }
.tag.left { transform: translateX(-100%); }
.hscroll { height: 14px; flex: none; border-top: 1px solid #aaa; background: #e3e3df; display: grid; grid-template-columns: 14px 23px 1fr 150px 14px; }
.hslider { grid-column: 3; background: linear-gradient(#fff, #f0eeec); border: solid #b0b0b0; border-width: 0 1px; }
.hscroll button { background: #fafafa; display: grid; place-items: center; }
.hscroll .l { border-right: 1px solid #b0b0b0; }
.hscroll .r { grid-column: 5; border-left: 1px solid #b0b0b0; }
.hscroll button::after { content: ""; border: 4px solid transparent; }
.hscroll .l::after { border-right-color: #555; border-left: 0; }
.hscroll .r::after { border-left-color: #555; border-right: 0; }
.status { height: 29px; flex: none; display: flex; align-items: center; padding: 7px 0 0 10px; gap: 8px; position: relative; }
.status .bar { width: 1px; height: 18px; background: #000; margin: 0 2px 0 5px; }
.grip { position: absolute; right: 2px; bottom: 2px; width: 10px; height: 10px; background: radial-gradient(#999 1px, transparent 1px) 0 0 / 3px 3px; clip-path: polygon(100% 0, 100% 100%, 0 100%); }
```

FILE: tree.js
```js
// Each node: [x, level, mean, spread, instances, split attribute, edge label, children]
const root = [595, 0, '11.9', '', 649, 'school', '', [
  [281, 1, '12.6', '', 423, 'sex', 'GP', [
    [119, 2, '13.0', '', 237, 'age', 'F', [
      [27, 3, '13.1', '', 223, 'age', '≤ 18', [
        [-16, 4, '12.2', '', 42, '', '≤ 15'],
        [72, 4, '13.3', '', 181, 'age', '> 15', [
          [34, 5, '12.9', '', 59, '', '≤ 16'],
          [109, 5, '13.5', '', 122, 'age', '> 16', [
            [84, 6, '13.7', '', 74, '', '≤ 17'],
            [135, 6, '13.2', '', 48, '', '> 17']]]]]]],
      [210, 3, '11.4', '', 14, 'age', '> 18', [
        [185, 4, '11.1', '', 10, '', '≤ 19'],
        [236, 4, '12.2', '', 4, '', '> 19']]]]],
    [444, 2, '12.0', '', 186, 'age', 'M', [
      [349, 3, '12.1', '', 184, 'age', '≤ 20', [
        [286, 4, '12.5', '', 44, '', '≤ 15'],
        [412, 4, '12.0', '', 140, 'age', '> 15', [
          [361, 5, '11.9', '', 96, 'age', '≤ 17', [
            [336, 6, '12.0', '', 53, '', '≤ 16'],
            [387, 6, '11.8', '', 43, '', '> 16']]],
          [462, 5, '12.1', '', 44, 'age', '> 17', [
            [437, 6, '12.2', '', 36, '', '≤ 18'],
            [487, 6, '11.6', '', 8, '', '> 18']]]]]]],
      [538, 3, '7.5', '6', 2, '', '> 20']]]]],
  [910, 1, '10.7', '', 226, 'age', 'MS', [
    [765, 2, '10.9', '', 209, 'sex', '≤ 18', [
      [695, 3, '11.3', '', 136, 'age', 'F', [
        [651, 4, '11.6', '', 100, 'age', '≤ 17', [
          [613, 5, '11.7', '', 61, 'age', '≤ 16', [
            [588, 6, '11.5', '', 15, '', '≤ 15'],
            [639, 6, '11.8', '', 46, '', '> 15']]],
          [689, 5, '11.4', '', 39, '', '> 16']]],
        [740, 4, '10.5', '', 36, '', '> 17']]],
      [834, 3, '10.1', '', 73, 'age', 'M', [
        [790, 4, '11.3', '', 11, '', '≤ 15'],
        [878, 4, '9.9', '1', 62, 'age', '> 15', [
          [840, 5, '9.6', '1', 19, '', '≤ 16'],
          [916, 5, '10.0', '', 43, 'age', '> 16', [
            [891, 6, '10.1', '', 23, '', '≤ 17'],
            [941, 6, '9.8', '2', 20, '', '> 17']]]]]]]]],
    [1095, 2, '7.9', '', 17, 'age', '> 18', [
      [1017, 3, '7.6', '', 15, 'sex', '≤ 19', [
        [992, 4, '7.4', '1', 9, '', 'F']]]]]]]]];

const tree = document.getElementById('tree');
const levelTop = level => 56 + Math.round(level * 75.8);
let lines = '', dots = '', boxes = '';

function draw([x, level, mean, spread, count, split, label, children], side) {
  if (x > 1029) {
    children.forEach(child => {
      link(x, level, count, child);
      draw(child, 'left');
    });
    return;
  }
  const y = levelTop(level);
  if (label && x > 0) boxes += `<span class="tag ${side}" style="left:${side === 'left' ? x + 18 : x + 24}px;top:${y - 13}px">${label}</span>`;
  boxes += `<div class="node${children ? '' : ' leaf'}" style="left:${x}px;top:${y}px"><div><b>${mean}</b> ± ${spread}</div><div>${count} instances</div>${children ? `<hr><div>${split}</div>` : ''}</div>`;
  if (!children) return;
  dots += `<circle cx="${x + 20}" cy="${y + 62}" r="3.5"/>`;
  children.forEach((child, i) => {
    link(x, level, count, child);
    draw(child, i ? 'right' : 'left');
  });
}

function link(x, level, count, child) {
  const width = Math.max(0.4, 5.5 * child[4] / count);
  lines += `<line x1="${x + 20}" y1="${levelTop(level) + 62}" x2="${child[0] + 20}" y2="${levelTop(child[1]) + 1}" stroke-width="${width}"/>`;
}

draw(root, '');
tree.innerHTML = `<svg><g stroke="#a0a0a4">${lines}</g><g fill="#a0a0a4" stroke="#c4c4c8" stroke-width="0.8">${dots}</g></svg>${boxes}`;
```
